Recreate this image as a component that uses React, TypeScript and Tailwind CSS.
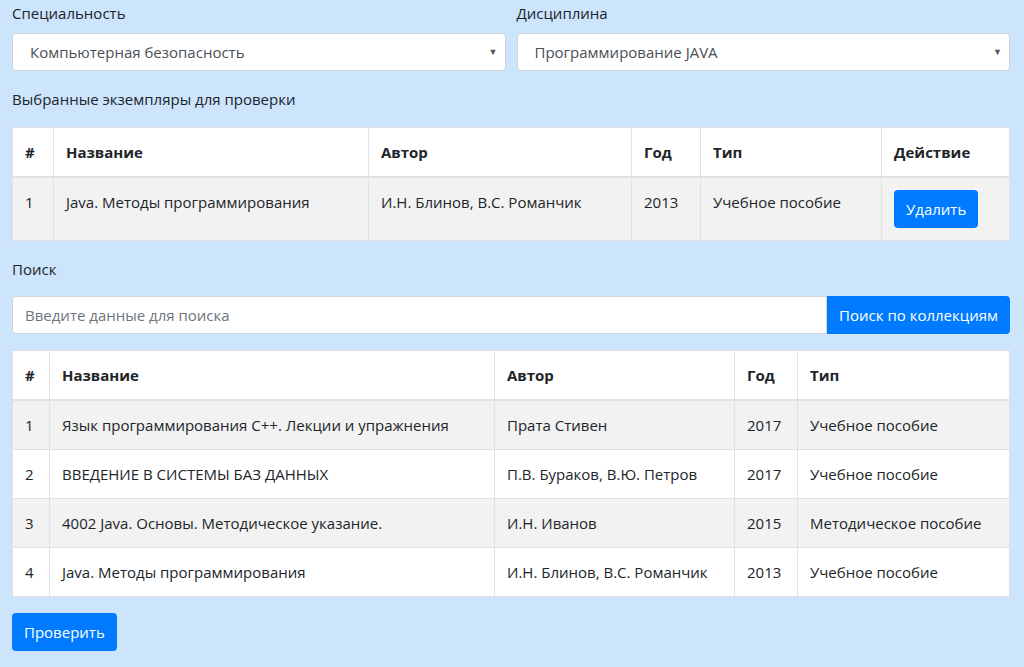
const font = { fontFamily: '"Open Sans", "Noto Sans", sans-serif' };

const selected = [
  { n: 1, title: "Java. Методы программирования", author: "И.Н. Блинов, В.С. Романчик", year: 2013, type: "Учебное пособие" },
];

const results = [
  { n: 1, title: "Язык программирования C++. Лекции и упражнения", author: "Прата Стивен", year: 2017, type: "Учебное пособие" },
  { n: 2, title: "ВВЕДЕНИЕ В СИСТЕМЫ БАЗ ДАННЫХ", author: "П.В. Бураков, В.Ю. Петров", year: 2017, type: "Учебное пособие" },
  { n: 3, title: "4002 Java. Основы. Методическое указание.", author: "И.Н. Иванов", year: 2015, type: "Методическое пособие" },
  { n: 4, title: "Java. Методы программирования", author: "И.Н. Блинов, В.С. Романчик", year: 2013, type: "Учебное пособие" },
];

function Select({ value }: { value: string }) {
  return (
    <div className="relative flex h-[38px] items-center rounded border border-[#ced4da] bg-white pl-[17px] text-[#495057]">
      {value}
      <span className="absolute right-[7px] top-[13px] text-[9px] leading-none text-[#555]">▼</span>
    </div>
  );
}

const th = "border border-[#dee2e6] border-b-2 px-3 py-3 text-left align-top font-bold";
const td = "border border-[#dee2e6] px-3 py-3 align-top";

export default function App() {
  return (
    <div className="min-h-screen bg-[#cce4fc] pl-3 pr-[14px] pt-[1px] text-[15px] leading-6 text-[#212529]" style={font}>
      <div className="grid grid-cols-2 gap-[11px]">
        <div>
          <div className="mb-2">Специальность</div>
          <Select value="Компьютерная безопасность" />
        </div>
        <div>
          <div className="mb-2">Дисциплина</div>
          <Select value="Программирование JAVA" />
        </div>
      </div>

      <div className="mt-4">Выбранные экземпляры для проверки</div>
      <table className="mt-4 w-full table-fixed border-collapse bg-white">
        <colgroup>
          <col className="w-[41px]" />
          <col className="w-[315px]" />
          <col className="w-[263px]" />
          <col className="w-[69px]" />
          <col className="w-[181px]" />
          <col />
        </colgroup>
        <thead>
          <tr>
            <th className={th}>#</th>
            <th className={th}>Название</th>
            <th className={th}>Автор</th>
            <th className={th}>Год</th>
            <th className={th}>Тип</th>
            <th className={th}>Действие</th>
          </tr>
        </thead>
        <tbody>
          {selected.map((r) => (
            <tr key={r.n} className="bg-[#f2f2f2]">
              <td className={td}>{r.n}</td>
              <td className={td}>{r.title}</td>
              <td className={td}>{r.author}</td>
              <td className={td}>{r.year}</td>
              <td className={td}>{r.type}</td>
              <td className={td}>
                <button className="block h-[38px] rounded bg-[#007bff] px-3 text-white">Удалить</button>
              </td>
            </tr>
          ))}
        </tbody>
      </table>

      <div className="mt-4">Поиск</div>
      <div className="mt-[15px] flex h-[38px]">
        <input
          className="min-w-0 flex-1 rounded-l border border-[#ced4da] bg-white px-3 text-[#495057] outline-none placeholder:text-[#6c757d]"
          placeholder="Введите данные для поиска"
        />
        <button className="rounded-r bg-[#007bff] px-3 text-white">Поиск по коллекциям</button>
      </div>

      <table className="mt-4 w-full table-fixed border-collapse bg-white">
        <colgroup>
          <col className="w-[37px]" />
          <col className="w-[445px]" />
          <col className="w-[240px]" />
          <col className="w-[63px]" />
          <col />
        </colgroup>
        <thead>
          <tr>
            <th className={th}>#</th>
            <th className={th}>Название</th>
            <th className={th}>Автор</th>
            <th className={th}>Год</th>
            <th className={th}>Тип</th>
          </tr>
        </thead>
        <tbody>
          {results.map((r, i) => (
            <tr key={r.n} className={i % 2 === 0 ? "bg-[#f2f2f2]" : "bg-white"}>
              <td className={td}>{r.n}</td>
              <td className={td}>{r.title}</td>
              <td className={td}>{r.author}</td>
              <td className={td}>{r.year}</td>
              <td className={td}>{r.type}</td>
            </tr>
          ))}
        </tbody>
      </table>

      <button className="mt-4 h-[38px] rounded bg-[#007bff] px-3 text-white">Проверить</button>
    </div>
  );
}
